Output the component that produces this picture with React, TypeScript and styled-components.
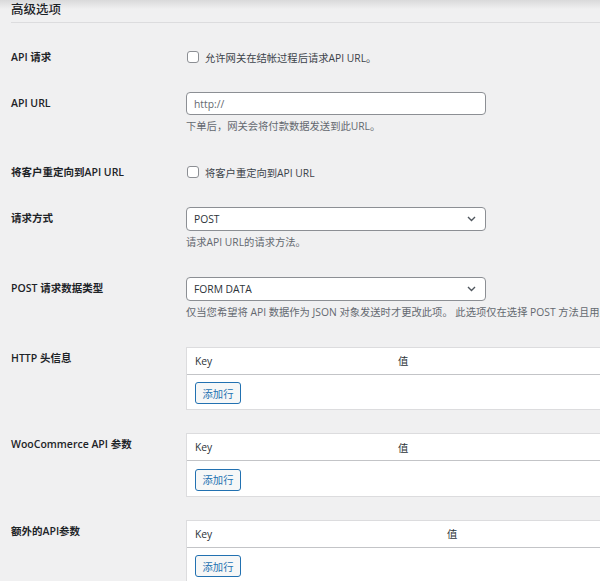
import React, { useState } from 'react';
import styled, { createGlobalStyle } from 'styled-components';

const GlobalStyle = createGlobalStyle`
  html, body {
    margin: 0;
    padding: 0;
    overflow: hidden;
  }
  body {
    background: linear-gradient(#d9d9da 0, #f0f0f1 9px) #f0f0f1;
    font-family: "Open Sans", "Noto Sans CJK SC", sans-serif;
    color: #1d2327;
    width: 600px;
    height: 581px;
  }
`;

const Page = styled.div`
  padding: 0 0 0 11px;
`;

const Heading = styled.h2`
  margin: 0;
  font-size: 12.5px;
  line-height: 20px;
  font-weight: 500;
  color: #1d2327;
  border-bottom: 1px solid #dcdcde;
  box-sizing: border-box;
  height: 23px;
`;

const Rows = styled.div`
  display: flex;
  flex-direction: column;
  margin-top: 11px;
`;

const Row = styled.div<{ $tight?: boolean }>`
  display: flex;
  padding: ${(p) => (p.$tight ? '11.5px 0' : '12px 0')};
`;

const Label = styled.div`
  width: 175px;
  flex: none;
  font-size: 10.5px;
  line-height: 22px;
  font-weight: 600;
  color: #1d2327;
  white-space: nowrap;
`;

const Field = styled.div`
  display: flex;
  flex-direction: column;
  flex: none;
`;

const CheckLine = styled.label`
  display: flex;
  align-items: center;
  gap: 6px;
  height: 22px;
  padding-left: 1px;
  font-size: 10.3px;
  color: #3c434a;
  white-space: nowrap;
`;

const Box = styled.span<{ $on: boolean }>`
  width: 12px;
  height: 12px;
  box-sizing: border-box;
  border: 1px solid #8c8f94;
  border-radius: 3px;
  background: ${(p) => (p.$on ? '#2271b1' : '#fff')};
  flex: none;
`;

const TextInput = styled.div`
  width: 300px;
  height: 23px;
  box-sizing: border-box;
  border: 1px solid #8c8f94;
  border-radius: 4px;
  background: #fff;
  padding: 0 7px;
  display: flex;
  align-items: center;
  font-size: 10.3px;
  color: #646970;
`;

const Select = styled(TextInput)`
  height: 24px;
  justify-content: space-between;
  color: #2c3338;
  padding-right: 9px;
`;

const Desc = styled.p`
  margin: 3px 0 3px;
  font-size: 10.3px;
  line-height: 16px;
  color: #646970;
  white-space: nowrap;
`;

const Table = styled.div<{ $keyWidth: number }>`
  width: 540px;
  border: 1px solid #dcdcde;
  box-sizing: border-box;
  background: #fff;

  .head {
    display: grid;
    grid-template-columns: ${(p) => p.$keyWidth}px 1fr;
    height: 26px;
    align-items: center;
    border-bottom: 1px solid #c3c4c7;
    padding-left: 8px;
    font-size: 10.3px;
    color: #2c3338;
  }

  .body {
    padding: 6px 8px 5px;
  }
`;

const AddButton = styled.button`
  height: 22px;
  width: 46px;
  box-sizing: border-box;
  border: 1px solid #2271b1;
  border-radius: 3px;
  background: #f6f7f7;
  color: #2271b1;
  font-family: inherit;
  font-size: 10.3px;
  padding: 0;
  cursor: pointer;
`;

const Chevron = () => (
  <svg width="9" height="6" viewBox="0 0 9 6" fill="none">
    <path d="M1 1l3.5 3.5L8 1" stroke="#50575e" strokeWidth="1.4" />
  </svg>
);

const Check = ({ text }: { text: string }) => {
  const [on, setOn] = useState(false);
  return (
    <CheckLine onClick={() => setOn(!on)}>
      <Box $on={on} />
      {text}
    </CheckLine>
  );
};

const ParamTable = ({ keyWidth }: { keyWidth: number }) => (
  <Table $keyWidth={keyWidth}>
    <div className="head">
      <span>Key</span>
      <span>值</span>
    </div>
    <div className="body">
      <AddButton type="button">添加行</AddButton>
    </div>
  </Table>
);

const App = () => (
  <>
    <GlobalStyle />
    <Page>
      <Heading>高级选项</Heading>
      <Rows>
        <Row>
          <Label>API 请求</Label>
          <Field>
            <Check text="允许网关在结帐过程后请求API URL。" />
          </Field>
        </Row>
        <Row>
          <Label>API URL</Label>
          <Field>
            <TextInput>http://</TextInput>
            <Desc>下单后，网关会将付款数据发送到此URL。</Desc>
          </Field>
        </Row>
        <Row>
          <Label>将客户重定向到API URL</Label>
          <Field>
            <Check text="将客户重定向到API URL" />
          </Field>
        </Row>
        <Row>
          <Label>请求方式</Label>
          <Field>
            <Select>
              POST
              <Chevron />
            </Select>
            <Desc>请求API URL的请求方法。</Desc>
          </Field>
        </Row>
        <Row>
          <Label>POST 请求数据类型</Label>
          <Field>
            <Select>
              FORM DATA
              <Chevron />
            </Select>
            <Desc>
              仅当您希望将 API 数据作为 JSON 对象发送时才更改此项。 此选项仅在选择 POST 方法且用户启用时可用。
            </Desc>
          </Field>
        </Row>
        <Row $tight>
          <Label>HTTP 头信息</Label>
          <Field>
            <ParamTable keyWidth={203} />
          </Field>
        </Row>
        <Row $tight>
          <Label>WooCommerce API 参数</Label>
          <Field>
            <ParamTable keyWidth={203} />
          </Field>
        </Row>
        <Row $tight>
          <Label>额外的API参数</Label>
          <Field>
            <ParamTable keyWidth={252} />
          </Field>
        </Row>
      </Rows>
    </Page>
  </>
);

export default App;
